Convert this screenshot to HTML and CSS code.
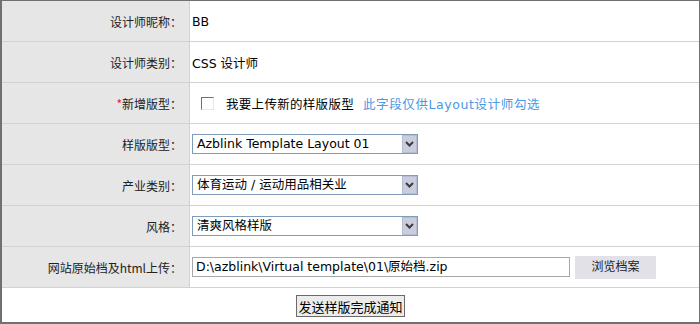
FILE: index.html
```html
<!DOCTYPE html>
<html lang="zh-CN">
<head>
    <meta charset="UTF-8">
    <title>发送样版完成通知</title>
    <link rel="stylesheet" href="styles.css">
</head>
<body>
    <form class="panel">
        <div class="row">
            <div class="label">设计师昵称：</div>
            <div class="field">BB</div>
        </div>
        <div class="row">
            <div class="label">设计师类别：</div>
            <div class="field">CSS 设计师</div>
        </div>
        <div class="row">
            <div class="label"><span class="required">*</span>新增版型：</div>
            <div class="field">
                <input type="checkbox" class="check" id="newLayout">
                <label for="newLayout" class="check-text">我要上传新的样版版型</label>
                <span class="hint">此字段仅供Layout设计师勾选</span>
            </div>
        </div>
        <div class="row">
            <div class="label">样版版型：</div>
            <div class="field">
                <div class="select">
                    <span class="select-text">Azblink Template Layout 01</span>
                    <span class="select-btn">
                        <svg width="9" height="6" viewBox="0 0 9 6"><path d="M1 1 L4.5 4.5 L8 1" fill="none" stroke="#3c3c3c" stroke-width="2"/></svg>
                    </span>
                </div>
            </div>
        </div>
        <div class="row">
            <div class="label">产业类别：</div>
            <div class="field">
                <div class="select">
                    <span class="select-text">体育运动 / 运动用品相关业</span>
                    <span class="select-btn">
                        <svg width="9" height="6" viewBox="0 0 9 6"><path d="M1 1 L4.5 4.5 L8 1" fill="none" stroke="#3c3c3c" stroke-width="2"/></svg>
                    </span>
                </div>
            </div>
        </div>
        <div class="row">
            <div class="label">风格：</div>
            <div class="field">
                <div class="select">
                    <span class="select-text">清爽风格样版</span>
                    <span class="select-btn">
                        <svg width="9" height="6" viewBox="0 0 9 6"><path d="M1 1 L4.5 4.5 L8 1" fill="none" stroke="#3c3c3c" stroke-width="2"/></svg>
                    </span>
                </div>
            </div>
        </div>
        <div class="row">
            <div class="label">网站原始档及html上传：</div>
            <div class="field">
                <span class="file-path">D:\azblink\Virtual template\01\原始档.zip</span>
                <span class="file-btn">浏览档案</span>
            </div>
        </div>
        <div class="actions">
            <button type="button" class="submit">发送样版完成通知</button>
        </div>
    </form>
</body>
</html>
```

FILE: styles.css
```css
body {
    margin: 0;
    font-family: "DejaVu Sans", "Noto Sans CJK SC", sans-serif;
    font-size: 12px;
    color: #000;
    background: #fff;
}

.panel {
    width: 700px;
    height: 324px;
    box-sizing: border-box;
    border: 1px solid #707070;
    border-left-width: 2px;
    border-bottom-width: 2px;
    margin: 0;
}

.row {
    display: grid;
    grid-template-columns: 188px 1fr;
    height: 41px;
    box-sizing: border-box;
    border-bottom: 1px solid #d2d2d2;
}

.label {
    display: flex;
    align-items: center;
    justify-content: flex-end;
    padding-right: 7px;
    background-color: #e6e6e6;
    border-right: 1px solid #d2d2d2;
    color: #222;
    font-family: "Noto Sans CJK SC", sans-serif;
}

.required {
    color: #e0203c;
}

.field {
    display: flex;
    align-items: center;
    padding-left: 2px;
    font-size: 12.5px;
}

.check {
    appearance: none;
    width: 13px;
    height: 13px;
    margin: 0 0 0 9px;
    box-sizing: border-box;
    border: 1px solid;
    border-color: #707070 #e8e8dc #e8e8dc #707070;
    background: #fff;
}

.check-text {
    margin-left: 12px;
    letter-spacing: 0.3px;
}

.hint {
    margin-left: 9px;
    color: #4a98e6;
    letter-spacing: 0.6px;
}

.select {
    display: flex;
    width: 226px;
    height: 20px;
    box-sizing: border-box;
    border: 1px solid #7f9db9;
    background: #fff;
}

.select-text {
    flex: 1;
    padding-left: 4px;
    line-height: 18px;
    white-space: nowrap;
    overflow: hidden;
}

.select-btn {
    display: flex;
    align-items: center;
    justify-content: center;
    width: 15px;
    box-sizing: border-box;
    border: 1px solid #b6bdd2;
    background: #c9cddd;
}

.file-path {
    width: 378px;
    height: 20px;
    box-sizing: border-box;
    padding-left: 3px;
    line-height: 18px;
    border: 1px solid #a8a8a8;
    white-space: nowrap;
}

.file-btn {
    width: 81px;
    height: 23px;
    margin-left: 5px;
    line-height: 23px;
    text-align: center;
    font-size: 12px;
    background: #e1e1e7;
    color: #222;
}

.actions {
    display: flex;
    justify-content: center;
    align-items: center;
    height: 34px;
    padding-top: 2px;
    box-sizing: border-box;
}

.submit {
    height: 22px;
    padding: 0 1px;
    font-family: inherit;
    font-size: 13px;
    color: #000;
    background: #ececec;
    border: 1px solid #6a6a6a;
    border-radius: 0;
}
```
